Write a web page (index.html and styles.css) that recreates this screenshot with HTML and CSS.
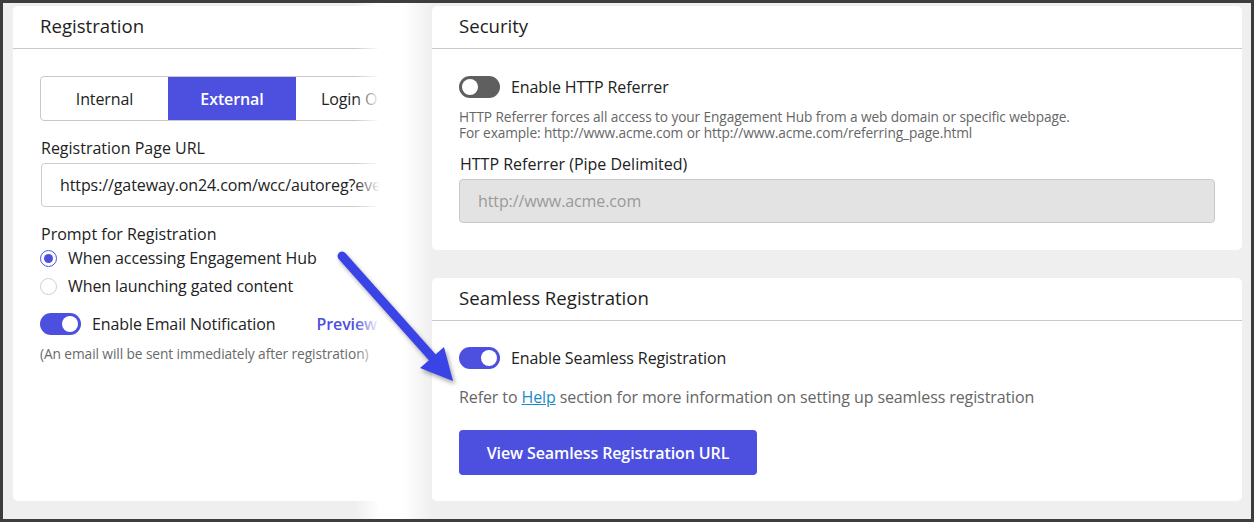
FILE: index.html
```html
<!DOCTYPE html>
<html>
<head>
<meta charset="utf-8">
<link rel="stylesheet" href="styles.css">
</head>
<body>
<div class="frame">
  <div class="layout">
    <section class="card card-left">
      <div class="card-head">Registration</div>
      <div class="card-body">
        <div class="tabs">
          <div class="tab">Internal</div>
          <div class="tab active">External</div>
          <div class="tab">Login Only</div>
        </div>
        <div class="label">Registration Page URL</div>
        <div class="input">https://gateway.on24.com/wcc/autoreg?eventid=1234567</div>
        <div class="label label-prompt">Prompt for Registration</div>
        <div class="radio-row"><span class="radio checked"></span>When accessing Engagement Hub</div>
        <div class="radio-row"><span class="radio"></span>When launching gated content</div>
        <div class="toggle-row toggle-email">
          <span class="toggle on"></span>
          <span class="toggle-text">Enable Email Notification</span>
          <span class="preview">Preview</span>
        </div>
        <div class="note">(An email will be sent immediately after registration)</div>
      </div>
    </section>
    <div class="col-right">
      <section class="card card-security">
        <div class="card-head">Security</div>
        <div class="card-body">
          <div class="toggle-row">
            <span class="toggle off"></span>
            <span class="toggle-text">Enable HTTP Referrer</span>
          </div>
          <div class="desc">
            <div>HTTP Referrer forces all access to your Engagement Hub from a web domain or specific webpage.</div>
            <div>For example: http://www.acme.com or http://www.acme.com/referring_page.html</div>
          </div>
          <div class="label label-ref">HTTP Referrer (Pipe Delimited)</div>
          <div class="input disabled">http://www.acme.com</div>
        </div>
      </section>
      <section class="card card-seamless">
        <div class="card-head">Seamless Registration</div>
        <div class="card-body">
          <div class="toggle-row">
            <span class="toggle on"></span>
            <span class="toggle-text">Enable Seamless Registration</span>
          </div>
          <div class="refer">Refer to <a class="help">Help</a> section for more information on setting up seamless registration</div>
          <div class="btn">View Seamless Registration URL</div>
        </div>
      </section>
    </div>
  </div>
  <div class="fade"></div>
  <svg class="arrow" width="1254" height="522" viewBox="0 0 1254 522">
    <line x1="342" y1="256" x2="432" y2="357" stroke="#3a44e6" stroke-width="9" stroke-linecap="round"/>
    <polygon points="453,381 420,368 444,347" fill="#3a44e6"/>
  </svg>
</div>
</body>
</html>
```

FILE: styles.css
```css
* { box-sizing: border-box; }
html, body { margin: 0; padding: 0; }
body {
  width: 1254px;
  height: 522px;
  overflow: hidden;
  font-family: "Open Sans", "Noto Sans", "Liberation Sans", sans-serif;
  color: #222;
  background: #3d3d3d;
  letter-spacing: -0.1px;
}
.frame {
  position: relative;
  width: 1254px;
  height: 522px;
  border: 3px solid #3d3d3d;
  background: #efefef;
  overflow: hidden;
}
.layout {
  display: grid;
  grid-template-columns: 400px 810px;
  column-gap: 19px;
  padding: 3px 0 0 10px;
}
.card {
  background: #fff;
  border-radius: 5px;
  overflow: hidden;
}
.card-left { height: 495px; }
.card-head {
  height: 43px;
  border-bottom: 1px solid #c9c9c9;
  padding: 8px 27px 0;
  font-size: 18.6px;
  font-weight: 500;
  line-height: 24px;
  letter-spacing: 0;
  color: #1e1e1e;
}
.card-body { padding: 27px 27px 0 27px; }

.tabs {
  display: flex;
  width: 420px;
  height: 45px;
  border: 1px solid #c8c8c8;
  border-radius: 4px;
  overflow: hidden;
}
.tab {
  width: 128px;
  flex: none;
  display: flex;
  align-items: center;
  justify-content: center;
  font-size: 16px;
  color: #222;
}
.tab:first-child { width: 127px; }
.tab.active {
  background: #4d50de;
  color: #fff;
  font-weight: 600;
}
.tab + .tab:not(.active) { border-left: 1px solid #c8c8c8; }
.tab.active + .tab { border-left: none; }

.label {
  font-size: 16px;
  font-weight: 500;
  line-height: 20px;
  color: #222;
  letter-spacing: 0;
}
.card-left .label { margin-top: 17px; margin-left: 1px; }
.card-left .label.label-prompt { margin-top: 17px; }

.input {
  height: 44px;
  border: 1px solid #cdcdcd;
  border-radius: 4px;
  margin-top: 5px;
  padding: 0 18px;
  display: flex;
  align-items: center;
  font-size: 16px;
  color: #222;
  white-space: nowrap;
  overflow: hidden;
}
.card-left .input { width: 420px; margin-left: 1px; }
.input.disabled {
  background: #e3e3e3;
  border-color: #c8c8c8;
  color: #9a9a9a;
  width: 756px;
}

.radio-row {
  display: flex;
  align-items: center;
  height: 28px;
  font-size: 16px;
  color: #222;
}
.radio {
  width: 17px;
  height: 17px;
  border-radius: 50%;
  border: 1px solid #cfcfcf;
  margin-right: 11px;
  flex: none;
  position: relative;
  background: #fff;
}
.radio.checked { border-color: #4d50de; }
.radio.checked::after {
  content: "";
  position: absolute;
  left: 3px;
  top: 3px;
  width: 9px;
  height: 9px;
  border-radius: 50%;
  background: #4d50de;
}

.toggle-row {
  display: flex;
  align-items: center;
  height: 22px;
  font-size: 16px;
  color: #222;
  white-space: nowrap;
}
.toggle-email { margin-top: 13px; }
.toggle {
  width: 41px;
  height: 22px;
  border-radius: 11px;
  position: relative;
  flex: none;
  margin-right: 11px;
}
.toggle::after {
  content: "";
  position: absolute;
  top: 3px;
  width: 16px;
  height: 16px;
  border-radius: 50%;
  background: #fff;
}
.toggle.on { background: #4d50de; }
.toggle.on::after { right: 3px; }
.toggle.off { background: #5f5f5f; }
.toggle.off::after { left: 3px; }
.preview {
  margin-left: 41px;
  color: #4d50de;
  font-weight: 600;
}
.note {
  margin-top: 10px;
  font-size: 13.75px;
  line-height: 18px;
  color: #6a6a6a;
}

.col-right {
  display: flex;
  flex-direction: column;
  gap: 28px;
}
.card-security { height: 244px; }
.card-seamless { height: 223px; }
.desc {
  margin-top: 11px;
  font-size: 13.7px;
  line-height: 16px;
  color: #666;
}
.label-ref { margin-top: 13px; margin-left: 1px; }

.card-seamless .card-body { padding-top: 26px; }
.refer {
  margin-top: 18px;
  font-size: 16px;
  line-height: 20px;
  color: #666;
}
.help {
  color: #1a8bc5;
  text-decoration: underline;
}
.btn {
  margin-top: 23px;
  width: 298px;
  height: 45px;
  border-radius: 4px;
  background: #4d50de;
  color: #fff;
  font-size: 16px;
  font-weight: 600;
  display: flex;
  align-items: center;
  justify-content: center;
}

.fade {
  position: absolute;
  left: 352px;
  top: 0;
  width: 77px;
  height: 100%;
  background: linear-gradient(to right, rgba(255,255,255,0) 0%, #fff 32%, #fff 62%, #efefef 100%);
}
.arrow {
  position: absolute;
  left: -3px;
  top: -3px;
  filter: drop-shadow(2px 3px 2px rgba(0,0,0,0.35));
}
```
